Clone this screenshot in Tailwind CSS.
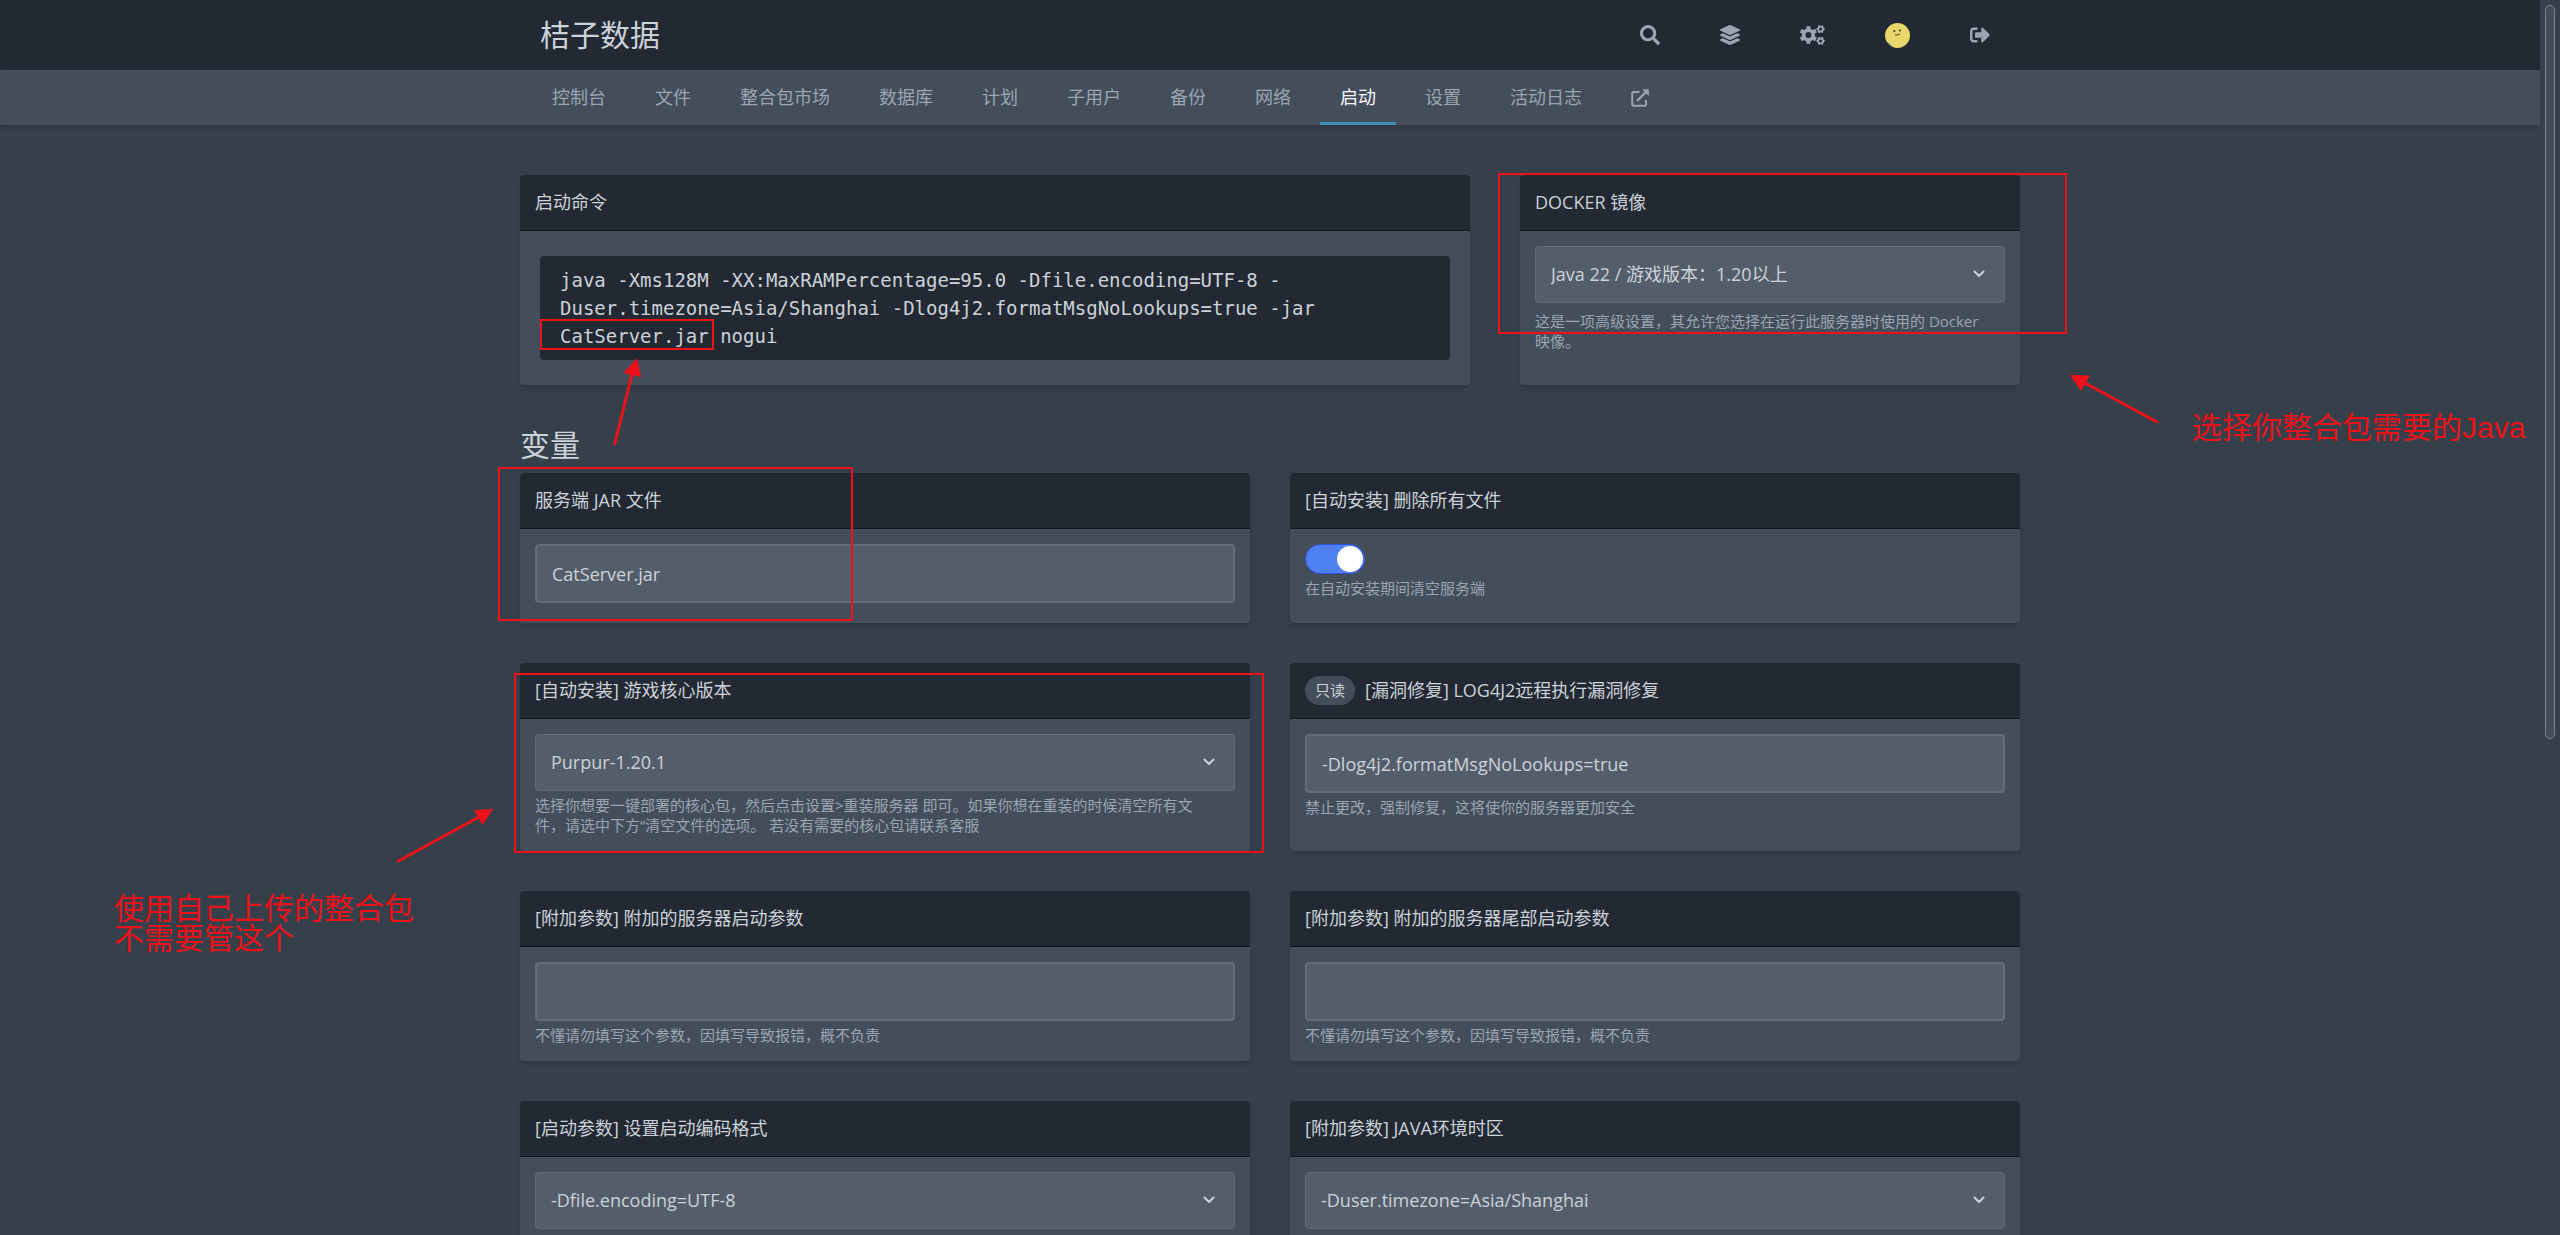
<!DOCTYPE html>
<html lang="zh-CN">
<head>
<meta charset="utf-8">
<title>桔子数据</title>
<script src="https://cdn.jsdelivr.net/npm/@tailwindcss/browser@4"></script>
</head>
<body class="bg-[#36404a] text-[#cbd2d9] font-['Open_Sans','Noto_Sans_CJK_SC',sans-serif]">
<div class="flex h-screen overflow-hidden">
  <div class="min-w-0 flex-1 overflow-x-hidden overflow-y-auto [scrollbar-width:none]">
    <header class="bg-[#222932]">
      <div class="mx-auto flex h-[70px] max-w-[1500px] items-center justify-between pl-5">
        <a href="#" class="text-[30px] leading-10">桔子数据</a>
        <nav class="-mr-[10px] flex h-full items-center pr-[10px] text-[#9aa5b1]" aria-label="用户">
          <button type="button" aria-label="搜索" class="flex h-full items-center px-[30px]">
            <svg class="size-5" viewBox="0 0 512 512" fill="currentColor"><path d="M505 442.7L405.3 343c-4.5-4.5-10.6-7-17-7H372c27.6-35.3 44-79.7 44-128C416 93.1 322.9 0 208 0S0 93.1 0 208s93.1 208 208 208c48.3 0 92.7-16.4 128-44v16.3c0 6.4 2.5 12.5 7 17l99.7 99.7c9.4 9.4 24.6 9.4 33.9 0l28.3-28.3c9.4-9.4 9.4-24.6.1-34zM208 336c-70.7 0-128-57.2-128-128 0-70.7 57.2-128 128-128 70.7 0 128 57.2 128 128 0 70.7-57.2 128-128 128z"/></svg>
          </button>
          <a href="#" aria-label="服务器" class="flex h-full items-center px-[30px]">
            <svg class="size-5" viewBox="0 0 512 512" fill="currentColor"><path d="M12.41 148.02l232.94 105.67c6.8 3.09 14.49 3.09 21.29 0l232.94-105.67c16.55-7.51 16.55-32.52 0-40.03L266.65 2.31a25.607 25.607 0 0 0-21.29 0L12.41 107.98c-16.55 7.51-16.55 32.53 0 40.04zm487.18 88.28l-58.09-26.33-161.64 73.27c-7.56 3.43-15.59 5.17-23.86 5.17s-16.29-1.74-23.86-5.17L70.51 209.97l-58.1 26.33c-16.55 7.5-16.55 32.5 0 40l232.94 105.59c6.8 3.08 14.49 3.08 21.29 0L499.59 276.3c16.55-7.5 16.55-32.5 0-40zm0 127.8l-57.87-26.23-161.86 73.37c-7.56 3.43-15.59 5.17-23.86 5.17s-16.29-1.74-23.86-5.17L70.29 337.87 12.41 364.1c-16.55 7.5-16.55 32.5 0 40l232.94 105.59c6.8 3.08 14.49 3.08 21.29 0L499.59 404.1c16.55-7.5 16.55-32.5 0-40z"/></svg>
          </a>
          <a href="#" aria-label="管理" class="flex h-full items-center px-[30px]">
            <svg class="h-5 w-[25px]" viewBox="0 0 25 20" fill="none" stroke="currentColor">
              <circle cx="8.4" cy="10" r="4.8" stroke-width="3.6"/>
              <path stroke-width="4" d="M8.4 5V1.2M8.4 15v3.8M4.1 7.5.8 5.6M12.7 12.5l3.3 1.9M4.1 12.5.8 14.4M12.7 7.5 16 5.6"/>
              <circle cx="20.6" cy="4.1" r="2.4" stroke-width="1.8"/>
              <path stroke-width="1.9" d="M18.3 4.1h-1.8M22.9 4.1h1.8M19.4 2.1l-.9-1.6M21.8 2.1l.9-1.6M19.4 6.1l-.9 1.6M21.8 6.1l.9 1.6"/>
              <circle cx="20.6" cy="15.9" r="2.4" stroke-width="1.8"/>
              <path stroke-width="1.9" d="M18.3 15.9h-1.8M22.9 15.9h1.8M19.4 13.9l-.9-1.6M21.8 13.9l.9-1.6M19.4 17.9l-.9 1.6M21.8 17.9l.9 1.6"/>
            </svg>
          </a>
          <a href="#" aria-label="账户" class="flex h-full items-center px-[30px]">
            <svg class="size-[25px]" viewBox="0 0 25 25"><circle cx="12.5" cy="12.5" r="12.5" fill="#e8d769"/><path d="M1.2 17.5 8 24.2A12.5 12.5 0 0 1 1.2 17.5z" fill="#5a6b8c"/><circle cx="9.3" cy="8" r="1" fill="#3a3420"/><circle cx="15" cy="7.4" r="1" fill="#3a3420"/><path d="M10.6 12.2c1.4.3 2.7-.9 4-1" stroke="#3a3420" stroke-width="1" fill="none" stroke-linecap="round"/></svg>
          </a>
          <button type="button" aria-label="退出登录" class="flex h-full items-center px-[30px]">
            <svg class="size-5" viewBox="0 0 512 512" fill="currentColor"><path d="M497 273L329 441c-15 15-41 4.5-41-17v-96H152c-13.3 0-24-10.7-24-24v-96c0-13.3 10.7-24 24-24h136V88c0-21.4 25.9-32 41-17l168 168c9.3 9.4 9.3 24.6 0 34zM192 436v-40c0-6.6-5.4-12-12-12H96c-17.7 0-32-14.3-32-32V160c0-17.7 14.3-32 32-32h84c6.6 0 12-5.4 12-12V76c0-6.6-5.4-12-12-12H96c-53 0-96 43-96 96v192c0 53 43 96 96 96h84c6.6 0 12-5.4 12-12z"/></svg>
          </button>
        </nav>
      </div>
    </header>

    <div class="bg-[#444e5a] shadow-md">
      <nav class="mx-auto flex h-[55px] max-w-[1500px] gap-[9px] px-3 text-[18px] leading-[25px] text-[#9aa5b1]" aria-label="服务器">
        <a href="#" class="flex items-center px-5">控制台</a>
        <a href="#" class="flex items-center px-5">文件</a>
        <a href="#" class="flex items-center px-5">整合包市场</a>
        <a href="#" class="flex items-center px-5">数据库</a>
        <a href="#" class="flex items-center px-5">计划</a>
        <a href="#" class="flex items-center px-5">子用户</a>
        <a href="#" class="flex items-center px-5">备份</a>
        <a href="#" class="flex items-center px-5">网络</a>
        <a href="#" aria-current="page" class="flex items-center px-5 text-[#f5f7fa] shadow-[inset_0_-3px_0_#3d8fb3]">启动</a>
        <a href="#" class="flex items-center px-5">设置</a>
        <a href="#" class="flex items-center px-5">活动日志</a>
        <a href="#" aria-label="在新窗口打开" class="flex items-center px-5">
          <svg class="size-[18px]" viewBox="0 0 18 18" fill="none" stroke="currentColor" stroke-width="2"><path d="M8.5 3H2.6A1.4 1.4 0 0 0 1.2 4.4v11A1.4 1.4 0 0 0 2.6 16.8h11a1.4 1.4 0 0 0 1.4-1.4V11"/><path d="M6 12 15 3" stroke-width="2.4"/><path d="M11.2.3h5.900a.7.7 0 0 1 .7.7v5.900z" fill="currentColor" stroke="none"/></svg>
        </a>
      </nav>
    </div>

    <main class="relative mx-auto max-w-[1500px] pt-[50px] pb-10">
      <div class="grid grid-cols-[19fr_10fr] gap-[50px]">
        <section class="overflow-hidden rounded bg-[#444e5a] shadow-md">
          <h2 class="flex h-14 items-center border-b border-[#12181f] bg-[#222932] px-[15px] text-[18px] leading-[25px]">启动命令</h2>
          <div class="px-5 py-[25px]">
            <code class="block rounded bg-[#222932] px-5 py-[10px] font-['DejaVu_Sans_Mono',monospace] text-[19px] leading-7">java -Xms128M -XX:MaxRAMPercentage=95.0 -Dfile.encoding=UTF-8 -<br>Duser.timezone=Asia/Shanghai -Dlog4j2.formatMsgNoLookups=true -jar<br>CatServer.jar nogui</code>
          </div>
        </section>
        <section class="overflow-hidden rounded bg-[#444e5a] shadow-md">
          <h2 class="flex h-14 items-center border-b border-[#12181f] bg-[#222932] px-[15px] text-[18px] leading-[25px]"><label for="docker">DOCKER 镜像</label></h2>
          <div class="p-[15px]">
            <div class="relative">
              <select id="docker" class="h-[57px] w-full appearance-none rounded border border-[#636d79] bg-[#545e6a] px-[15px] text-[18px]"><option>Java 22 / 游戏版本：1.20以上</option></select>
              <svg class="pointer-events-none absolute top-6 right-5 h-2 w-3" viewBox="0 0 12 8" fill="none" stroke="currentColor" stroke-width="2" stroke-linecap="round" stroke-linejoin="round"><path d="M1.5 1.5 6 6l4.5-4.5"/></svg>
            </div>
            <p class="mt-2 text-[15px] leading-5 text-[#9aa5b1]">这是一项高级设置，其允许您选择在运行此服务器时使用的 Docker<br>映像。</p>
          </div>
        </section>
      </div>

      <h1 class="mt-10 mb-2 text-[30px] leading-10">变量</h1>

      <div class="grid grid-cols-2 gap-10">
        <section class="overflow-hidden rounded bg-[#444e5a] shadow-md">
          <h2 class="flex h-14 items-center border-b border-[#12181f] bg-[#222932] px-[15px] text-[18px] leading-[25px]"><label for="jar">服务端 JAR 文件</label></h2>
          <div class="px-[15px] pt-[15px] pb-5">
            <input id="jar" type="text" value="CatServer.jar" class="block h-[59px] w-full rounded border-2 border-[#636d79] bg-[#545e6a] px-[15px] text-[18px]">
          </div>
        </section>
        <section class="overflow-hidden rounded bg-[#444e5a] shadow-md">
          <h2 class="flex h-14 items-center border-b border-[#12181f] bg-[#222932] px-[15px] text-[18px] leading-[25px]"><label for="wipe">[自动安装] 删除所有文件</label></h2>
          <div class="px-[15px] pt-[15px] pb-4">
            <div class="relative h-[30px] w-[60px]">
              <input id="wipe" type="checkbox" checked class="block h-full w-full appearance-none rounded-full border border-[#2f53dc] bg-[#4f80ef]">
              <span class="pointer-events-none absolute top-[2px] right-[2px] size-[26px] rounded-full bg-white"></span>
            </div>
            <p class="mt-1 text-[15px] leading-5 text-[#9aa5b1]">在自动安装期间清空服务端</p>
          </div>
        </section>

        <section class="overflow-hidden rounded bg-[#444e5a] shadow-md">
          <h2 class="flex h-14 items-center border-b border-[#12181f] bg-[#222932] px-[15px] text-[18px] leading-[25px]"><label for="core">[自动安装] 游戏核心版本</label></h2>
          <div class="px-[15px] pt-[15px] pb-4">
            <div class="relative">
              <select id="core" class="h-[57px] w-full appearance-none rounded border border-[#636d79] bg-[#545e6a] px-[15px] text-[18px]"><option>Purpur-1.20.1</option></select>
              <svg class="pointer-events-none absolute top-6 right-5 h-2 w-3" viewBox="0 0 12 8" fill="none" stroke="currentColor" stroke-width="2" stroke-linecap="round" stroke-linejoin="round"><path d="M1.5 1.5 6 6l4.5-4.5"/></svg>
            </div>
            <p class="mt-1 text-[15px] leading-5 text-[#9aa5b1]">选择你想要一键部署的核心包，然后点击设置&gt;重装服务器 即可。如果你想在重装的时候清空所有文<br>件，请选中下方“清空文件的选项。 若没有需要的核心包请联系客服</p>
          </div>
        </section>
        <section class="overflow-hidden rounded bg-[#444e5a] shadow-md">
          <h2 class="flex h-14 items-center gap-[10px] border-b border-[#12181f] bg-[#222932] px-[15px] text-[18px] leading-[25px]"><span class="rounded-full bg-[#444e5a] px-[10px] py-[2px] text-[15px]">只读</span><label for="log4j">[漏洞修复] LOG4J2远程执行漏洞修复</label></h2>
          <div class="px-[15px] pt-[15px] pb-4">
            <input id="log4j" type="text" readonly value="-Dlog4j2.formatMsgNoLookups=true" class="block h-[59px] w-full rounded border-2 border-[#636d79] bg-[#545e6a] px-[15px] text-[18px]">
            <p class="mt-1 text-[15px] leading-5 text-[#9aa5b1]">禁止更改，强制修复，这将使你的服务器更加安全</p>
          </div>
        </section>

        <section class="overflow-hidden rounded bg-[#444e5a] shadow-md">
          <h2 class="flex h-14 items-center border-b border-[#12181f] bg-[#222932] px-[15px] text-[18px] leading-[25px]"><label for="args-head">[附加参数] 附加的服务器启动参数</label></h2>
          <div class="px-[15px] pt-[15px] pb-4">
            <input id="args-head" type="text" class="block h-[59px] w-full rounded border-2 border-[#636d79] bg-[#545e6a] px-[15px] text-[18px]">
            <p class="mt-1 text-[15px] leading-5 text-[#9aa5b1]">不懂请勿填写这个参数，因填写导致报错，概不负责</p>
          </div>
        </section>
        <section class="overflow-hidden rounded bg-[#444e5a] shadow-md">
          <h2 class="flex h-14 items-center border-b border-[#12181f] bg-[#222932] px-[15px] text-[18px] leading-[25px]"><label for="args-tail">[附加参数] 附加的服务器尾部启动参数</label></h2>
          <div class="px-[15px] pt-[15px] pb-4">
            <input id="args-tail" type="text" class="block h-[59px] w-full rounded border-2 border-[#636d79] bg-[#545e6a] px-[15px] text-[18px]">
            <p class="mt-1 text-[15px] leading-5 text-[#9aa5b1]">不懂请勿填写这个参数，因填写导致报错，概不负责</p>
          </div>
        </section>

        <section class="overflow-hidden rounded bg-[#444e5a] shadow-md">
          <h2 class="flex h-14 items-center border-b border-[#12181f] bg-[#222932] px-[15px] text-[18px] leading-[25px]"><label for="encoding">[启动参数] 设置启动编码格式</label></h2>
          <div class="p-[15px]">
            <div class="relative">
              <select id="encoding" class="h-[57px] w-full appearance-none rounded border border-[#636d79] bg-[#545e6a] px-[15px] text-[18px]"><option>-Dfile.encoding=UTF-8</option></select>
              <svg class="pointer-events-none absolute top-6 right-5 h-2 w-3" viewBox="0 0 12 8" fill="none" stroke="currentColor" stroke-width="2" stroke-linecap="round" stroke-linejoin="round"><path d="M1.5 1.5 6 6l4.5-4.5"/></svg>
            </div>
          </div>
        </section>
        <section class="overflow-hidden rounded bg-[#444e5a] shadow-md">
          <h2 class="flex h-14 items-center border-b border-[#12181f] bg-[#222932] px-[15px] text-[18px] leading-[25px]"><label for="timezone">[附加参数] JAVA环境时区</label></h2>
          <div class="p-[15px]">
            <div class="relative">
              <select id="timezone" class="h-[57px] w-full appearance-none rounded border border-[#636d79] bg-[#545e6a] px-[15px] text-[18px]"><option>-Duser.timezone=Asia/Shanghai</option></select>
              <svg class="pointer-events-none absolute top-6 right-5 h-2 w-3" viewBox="0 0 12 8" fill="none" stroke="currentColor" stroke-width="2" stroke-linecap="round" stroke-linejoin="round"><path d="M1.5 1.5 6 6l4.5-4.5"/></svg>
            </div>
          </div>
        </section>
      </div>

      <!-- Tutorial annotations: boxes, arrows and notes over the page -->
      <svg class="pointer-events-none absolute top-0 left-0 h-[800px] w-[1500px] overflow-visible" viewBox="520 125 1500 800" fill="none" stroke="#ee1119" stroke-width="2" aria-hidden="true">
        <rect x="541" y="320" width="172" height="29"/>
        <rect x="1499" y="174" width="567" height="159"/>
        <rect x="499" y="468" width="353" height="152"/>
        <rect x="515" y="674" width="748" height="178"/>
        <path stroke-width="3" d="M614.5 445 632 374M2158 422.5 2085 383M397.5 861.5 479 817"/>
        <path stroke="none" fill="#ee1119" d="M637 358 623.5 373 641 377zM2070 375l20 .5-9 15.5zM493 809l-19 1 8.5 15z"/>
      </svg>
      <p class="pointer-events-none absolute top-[288px] left-[1672px] font-['Liberation_Sans','Noto_Sans_CJK_SC',sans-serif] text-[30px] leading-[30px] whitespace-nowrap text-[#ee1119]">选择你整合包需要的Java</p>
      <p class="pointer-events-none absolute top-[769px] -left-[406px] font-['Liberation_Sans','Noto_Sans_CJK_SC',sans-serif] text-[30px] leading-[30px] whitespace-nowrap text-[#ee1119]">使用自己上传的整合包<br>不需要管这个</p>
    </main>
  </div>
  <div class="w-5 shrink-0 px-[5px]" aria-hidden="true">
    <div class="mt-[5px] h-[734px] w-[10px] rounded-full border border-[#7b8794] bg-[#444e5a]"></div>
  </div>
</div>
</body>
</html>
